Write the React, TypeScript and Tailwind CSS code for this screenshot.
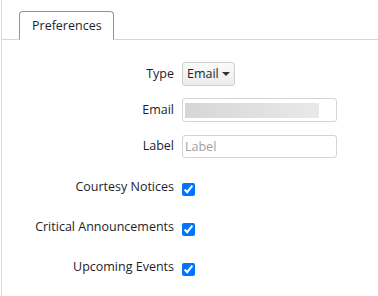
import React from 'react';

const checks = ['Courtesy Notices', 'Critical Announcements', 'Upcoming Events'];

const App: React.FC = () => {
  return (
    <div className="w-[378px] h-[296px] bg-white pl-px text-[12.5px] text-[#1e1e2a] font-['Open_Sans',sans-serif] overflow-hidden">
      <div className="h-full border-l border-[#dcdcdc]">
        {/* Tabs */}
        <div className="pt-[11px] pl-[17px] border-b border-[#d6d6d6]">
          <div className="inline-block -mb-px h-[29px] pl-[12px] pr-[11px] pt-[5px] bg-white border border-b-white border-[#6a9fc2] rounded-t-[4px] leading-[18px]">
            Preferences
          </div>
        </div>

        {/* Form */}
        <div className="pt-[22px] flex flex-col">
          <div className="flex items-center h-[24px]">
            <label className="w-[172px] text-right">Type</label>
            <button className="ml-[8px] h-[24px] pl-[4px] pr-[4px] flex items-center gap-[3px] border border-[#cfcfcf] rounded-[3px] bg-gradient-to-b from-[#fafafa] to-[#ececec] leading-none">
              Email
              <span className="w-0 h-0 border-l-[4px] border-r-[4px] border-t-[4px] border-l-transparent border-r-transparent border-t-[#333]" />
            </button>
          </div>

          <div className="flex items-center h-[24px] mt-[12px]">
            <label className="w-[172px] text-right">Email</label>
            <div className="ml-[8px] w-[155px] h-[24px] border border-[#d4d4d4] rounded-[3px] flex items-center px-[2px]">
              <div className="w-[134px] h-[15px] bg-gradient-to-r from-[#d6d6d6] to-[#e9e9e9]" />
            </div>
          </div>

          <div className="flex items-center h-[24px] mt-[12px]">
            <label className="w-[172px] text-right">Label</label>
            <input
              placeholder="Label"
              className="ml-[8px] w-[155px] h-[23px] border border-[#d4d4d4] rounded-[3px] px-[2px] outline-none placeholder:text-[#a0a0a0]"
            />
          </div>

          <div className="flex flex-col gap-[16px] mt-[17px]">
            {checks.map((c) => (
              <div key={c} className="flex items-center h-[24px]">
                <label className="w-[172px] text-right">{c}</label>
                <input type="checkbox" defaultChecked className="ml-[8px] mt-[5px] w-[13px] h-[13px] accent-[#0075ff]" />
              </div>
            ))}
          </div>
        </div>
      </div>
    </div>
  );
};

export default App;
